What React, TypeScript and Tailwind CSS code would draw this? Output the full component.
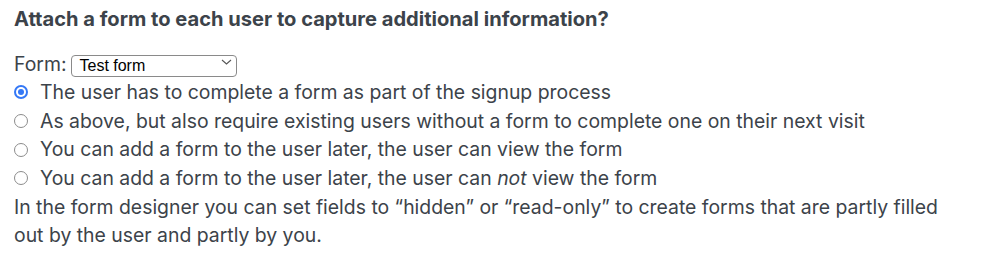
import React from "react";

const options = [
  { label: <>The user has to complete a form as part of the signup process</>, checked: true },
  { label: <>As above, but also require existing users without a form to complete one on their next visit</> },
  { label: <>You can add a form to the user later, the user can view the form</> },
  {
    label: (
      <>
        You can add a form to the user later, the user can <em>not</em> view the form
      </>
    ),
  },
];

function Radio({ checked }: { checked?: boolean }) {
  if (checked) {
    return (
      <span className="flex h-[14px] w-[14px] shrink-0 items-center justify-center rounded-full bg-[#3478f6]">
        <span className="flex h-[10px] w-[10px] items-center justify-center rounded-full bg-white">
          <span className="h-[6px] w-[6px] rounded-full bg-[#3478f6]" />
        </span>
      </span>
    );
  }
  return <span className="h-[14px] w-[14px] shrink-0 rounded-full border border-[#8c8c8c] bg-white" />;
}

function App() {
  return (
    <div className="min-h-[273px] bg-white px-[14px] pt-[5px] font-['Inter',sans-serif] text-[19.4px] leading-[28.6px] text-[#3c434a]">
      <h2 className="text-[20.1px] font-bold">Attach a form to each user to capture additional information?</h2>

      <div className="mt-[16px] flex items-center">
        <span>Form:</span>
        <div className="relative ml-[5px]">
          <select
            defaultValue="test"
            className="h-[22px] w-[166px] appearance-none rounded-[4px] border border-[#8a8a8a] bg-white pl-[7px] font-['Liberation_Sans',Arial,sans-serif] text-[16px] leading-[20px] text-black"
          >
            <option value="test">Test form</option>
          </select>
          <svg
            className="pointer-events-none absolute right-[5px] top-[9px]"
            width="11"
            height="6"
            viewBox="0 0 11 6"
            fill="none"
          >
            <path d="M1 1l4.5 4 4.5-4" stroke="#555" strokeWidth="1.1" />
          </svg>
        </div>
      </div>

      <div className="flex flex-col">
        {options.map((o, i) => (
          <label key={i} className="flex items-center">
            <Radio checked={o.checked} />
            <span className="ml-[12px]">{o.label}</span>
          </label>
        ))}
      </div>

      <p>
        In the form designer you can set fields to “hidden” or “read-only” to create forms that are partly filled
        <br />
        out by the user and partly by you.
      </p>
    </div>
  );
}

export default App;
